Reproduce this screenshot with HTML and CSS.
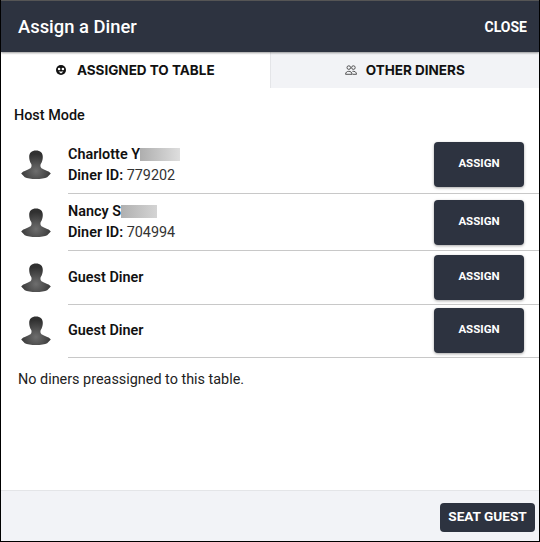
FILE: index.html
```html
<!DOCTYPE html>
<html lang="en">
<head>
  <meta charset="UTF-8">
  <meta name="viewport" content="width=device-width, initial-scale=1.0">
  <title>Assign a Diner</title>
  <link rel="stylesheet" href="styles.css">
</head>
<body>
  <svg class="defs" width="0" height="0">
    <defs>
      <radialGradient id="bust-fill" cx="0.5" cy="0.72" r="0.6">
        <stop offset="0" stop-color="#6e6e6e"/>
        <stop offset="1" stop-color="#303030"/>
      </radialGradient>
      <symbol id="bust" viewBox="0 0 30 30">
        <path fill="url(#bust-fill)" d="M15 0.500c-4.400 0-6.800 2.400-6.800 6.400 0 2.800 0.800 5.200 1.900 6.800 0.600 1 0.600 2.600 0.100 3.600-0.700 1.300-2.400 2-4.800 2.900-2.200 0.800-4.100 1.700-5.200 3.300l3.600 3.700c2.200 1.200 6.500 1.800 11.200 1.800s9-0.600 11.200-1.800l3.600-3.700c-1.100-1.600-3-2.500-5.200-3.300-2.400-0.900-4.100-1.600-4.800-2.900-0.500-1-0.500-2.600 0.100-3.600 1.100-1.600 1.900-4 1.900-6.800 0-4-2.400-6.400-6.800-6.400z"/>
      </symbol>
    </defs>
  </svg>

  <div class="modal">
    <header class="modal-header">
      <h1>Assign a Diner</h1>
      <span class="close">CLOSE</span>
    </header>

    <div class="tabs">
      <div class="tab tab-active">
        <svg class="tab-icon" width="10" height="10" viewBox="0 0 10 10">
          <circle cx="5" cy="5" r="5" fill="#111"/>
          <circle cx="3.100" cy="4" r="1.300" fill="#fff"/>
          <circle cx="6.900" cy="4" r="1.300" fill="#fff"/>
          <path d="M2.600 6.500h4.800L5 8.600z" fill="#fff"/>
        </svg>
        <span>ASSIGNED TO TABLE</span>
      </div>
      <div class="tab">
        <svg class="tab-icon" width="12" height="10" viewBox="0 0 12 10" fill="none" stroke="#444" stroke-width="0.9">
          <circle cx="3.800" cy="2.600" r="1.800"/>
          <circle cx="8.400" cy="2.600" r="1.800"/>
          <path d="M0.600 9.300c0-2 1.400-3 3.200-3s3.200 1 3.200 3z"/>
          <path d="M7.400 6.300c2.200-0.400 4.100 0.800 4.100 3h-4"/>
        </svg>
        <span>OTHER DINERS</span>
      </div>
    </div>

    <main class="content">
      <h2 class="mode">Host Mode</h2>

      <div class="diner diner-first">
        <svg class="avatar" width="30" height="30"><use href="#bust"/></svg>
        <div class="diner-body">
          <div class="diner-info">
            <div class="name">Charlotte Y<span class="redact redact-long"></span></div>
            <div class="diner-id"><b>Diner ID:</b> 779202</div>
          </div>
          <button class="btn btn-assign">ASSIGN</button>
        </div>
      </div>

      <div class="diner">
        <svg class="avatar" width="30" height="30"><use href="#bust"/></svg>
        <div class="diner-body">
          <div class="diner-info">
            <div class="name">Nancy S<span class="redact redact-short"></span></div>
            <div class="diner-id"><b>Diner ID:</b> 704994</div>
          </div>
          <button class="btn btn-assign">ASSIGN</button>
        </div>
      </div>

      <div class="diner diner-guest">
        <svg class="avatar" width="30" height="30"><use href="#bust"/></svg>
        <div class="diner-body">
          <div class="diner-info">
            <div class="name">Guest Diner</div>
          </div>
          <button class="btn btn-assign">ASSIGN</button>
        </div>
      </div>

      <div class="diner diner-guest">
        <svg class="avatar" width="30" height="30"><use href="#bust"/></svg>
        <div class="diner-body">
          <div class="diner-info">
            <div class="name">Guest Diner</div>
          </div>
          <button class="btn btn-assign">ASSIGN</button>
        </div>
      </div>

      <p class="empty">No diners preassigned to this table.</p>
    </main>

    <footer class="modal-footer">
      <button class="btn btn-seat">SEAT GUEST</button>
    </footer>
  </div>
</body>
</html>
```

FILE: styles.css
```css
html, body {
  margin: 0;
  height: 100%;
}
body {
  font-family: Roboto, 'Liberation Sans', sans-serif;
  color: #111;
  background: #fff;
  overflow: hidden;
}
.defs {
  display: block;
  height: 0;
}
.modal {
  box-sizing: border-box;
  height: 542px;
  display: flex;
  flex-direction: column;
  border-left: 1px solid #000;
  border-right: 1px solid #000;
  border-bottom: 1px solid #000;
}
.modal-header {
  flex: none;
  box-sizing: border-box;
  height: 52px;
  padding: 0 12px 0 17px;
  display: flex;
  align-items: center;
  justify-content: space-between;
  background: #2d3340;
  border-top: 1px solid #555;
  box-shadow: 0 1px 2px rgba(0, 0, 0, 0.4);
  position: relative;
  color: #fff;
}
.modal-header h1 {
  margin: 0;
  font-size: 18.400px;
  font-weight: 500;
}
.close {
  font-size: 14px;
  font-weight: 700;
}
.tabs {
  flex: none;
  display: flex;
  height: 36px;
}
.tab {
  flex: 1;
  display: flex;
  align-items: center;
  justify-content: center;
  gap: 9px;
  padding-bottom: 1px;
  background: #f2f3f6;
  border-left: 1px solid #e4e5e8;
  font-family: Inter, 'Open Sans', sans-serif;
  font-size: 13.500px;
  font-weight: 700;
  color: #111;
}
.tab-active {
  gap: 11px;
  padding-bottom: 0;
  background: #fff;
  border-left: none;
}
.content {
  flex: 1;
  padding-top: 21px;
}
.mode {
  margin: 0 0 13px 13px;
  font-size: 14.400px;
  line-height: 14px;
  font-weight: 500;
}
.diner {
  display: flex;
  align-items: center;
}
.avatar {
  flex: none;
  margin: 0 17px 0 20px;
}
.diner-body {
  flex: 1;
  display: flex;
  align-items: center;
  justify-content: space-between;
  padding: 6px 15px 5px 0;
  border-bottom: 1px solid #c8c8c8;
}
.diner-first .diner-body {
  padding-bottom: 6px;
}
.diner-guest .diner-body {
  padding: 3.500px 15px 4px 0;
}
.diner-info {
  padding-bottom: 1px;
}
.diner-first .diner-info,
.diner-guest .diner-info {
  padding-bottom: 0;
}
.name,
.diner-id {
  font-size: 14.400px;
  line-height: 21px;
}
.name,
.diner-id b {
  font-weight: 600;
}
.diner-id {
  color: #333;
}
.diner-id b {
  color: #111;
}
.redact {
  display: inline-block;
  height: 13px;
  vertical-align: -2px;
  background: linear-gradient(to right, #aeaeae, #dedede);
}
.redact-long {
  width: 40px;
}
.redact-short {
  width: 36px;
  background: linear-gradient(to right, #b0b0b0, #d4d4d4);
}
.btn {
  border: none;
  border-radius: 4px;
  background: #2d3340;
  color: #fff;
  font-family: Roboto, 'Liberation Sans', sans-serif;
  font-weight: 700;
}
.btn-assign {
  width: 90px;
  height: 45px;
  padding: 0 0 3px;
  font-size: 11.500px;
  box-shadow: 0 1px 3px rgba(0, 0, 0, 0.35);
}
.empty {
  margin: 14px 0 0 17px;
  font-size: 14.400px;
  line-height: 16px;
  color: #222;
}
.modal-footer {
  flex: none;
  box-sizing: border-box;
  height: 51px;
  padding: 12px 4px 0 0;
  display: flex;
  justify-content: flex-end;
  align-items: flex-start;
  background: #f2f3f7;
  border-top: 1px solid #e4e5e8;
}
.btn-seat {
  width: 95px;
  height: 29px;
  font-size: 13.600px;
  padding: 0 0 4px;
}
```
